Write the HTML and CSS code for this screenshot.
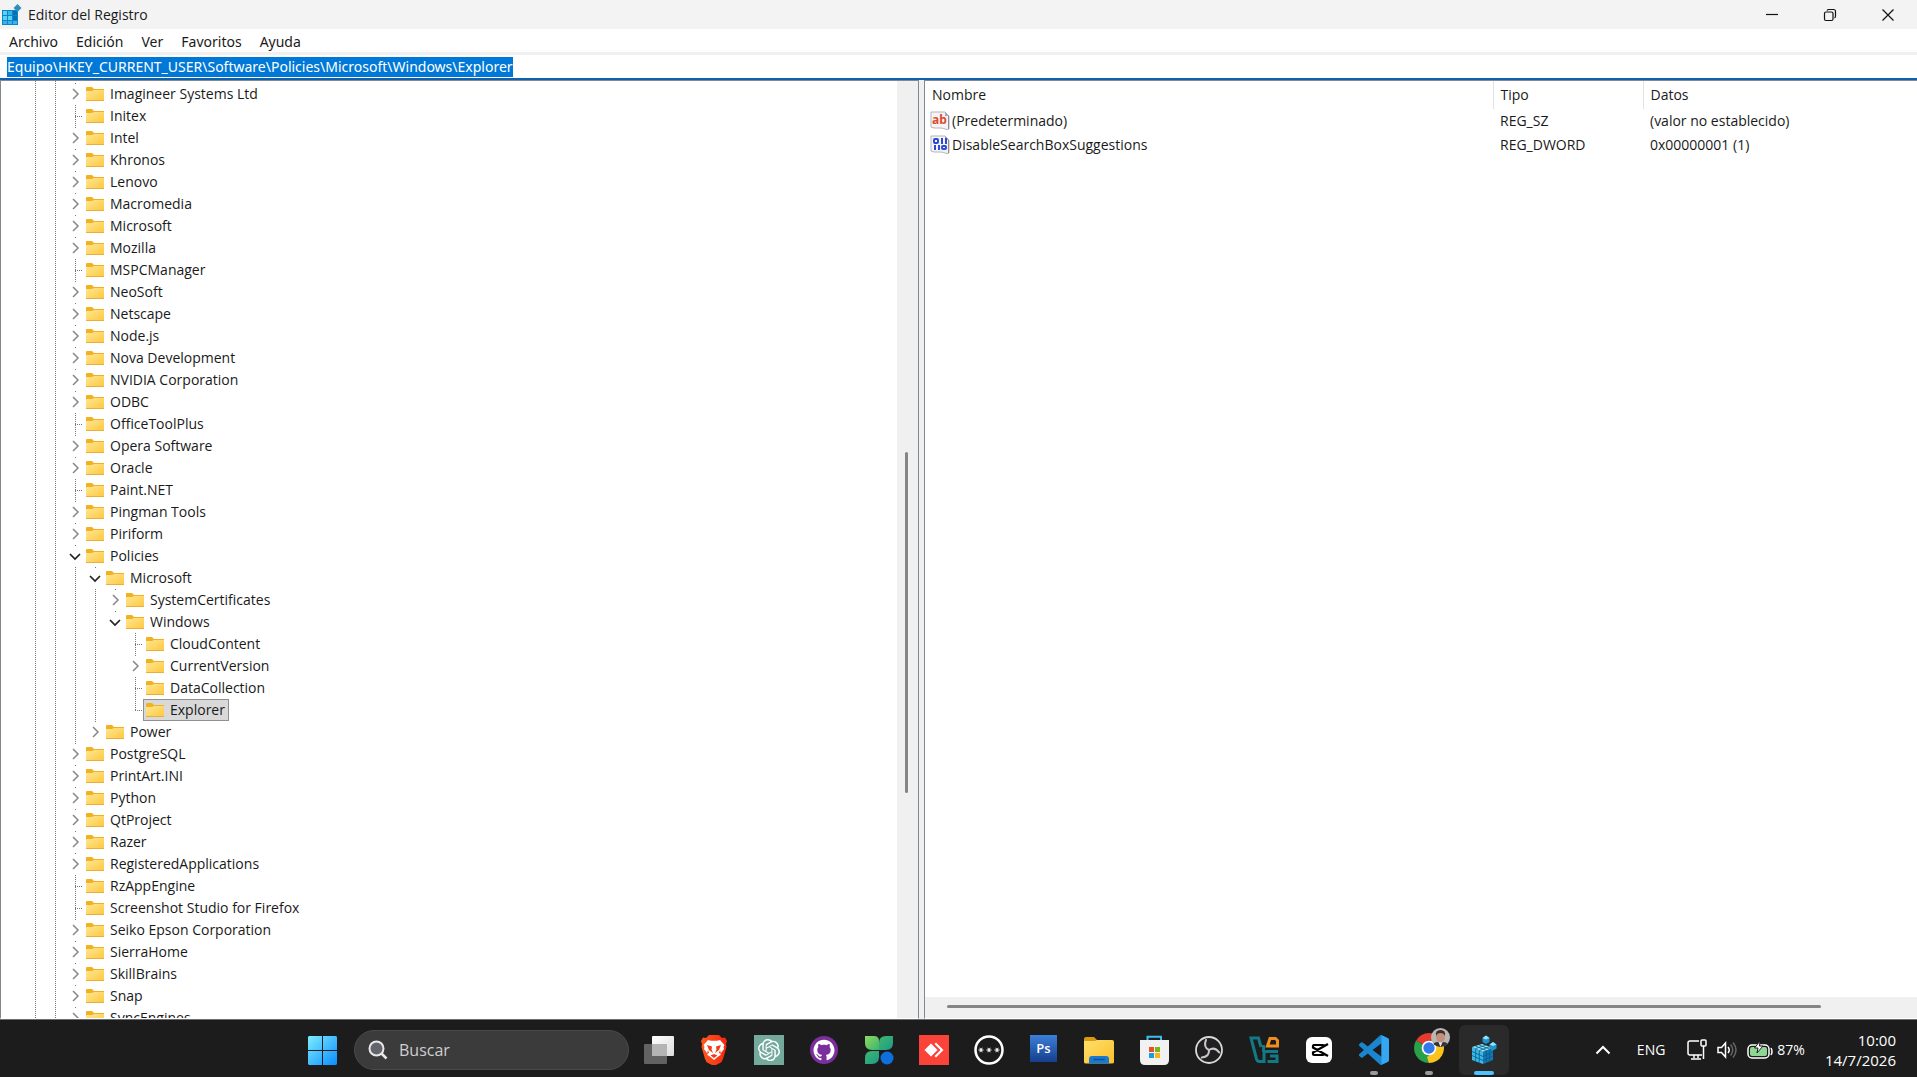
FILE: index.html
```html
<!DOCTYPE html>
<html lang="es">
<head>
<meta charset="utf-8">
<title>Editor del Registro</title>
<link rel="stylesheet" href="styles.css">
</head>
<body>
<header class="titlebar">
  <svg class="app-icon" viewBox="0 0 20 22" aria-hidden="true">
    <path d="M0 6h16v15H0z" fill="#0b86c8"/>
    <path d="M1 7h4v4H1zM1 12h4v4H1zM6 12h4v4H6z" fill="#5fd0f5"/>
    <path d="M6 7h4v4H6zM1 17h4v3H1zM6 17h4v3H6zM11 17h4v3h-4z" fill="#38b4ea"/>
    <path d="M11 7h4v4h-4zM11 12h4v4h-4z" fill="#0a6fae"/>
    <path d="M15.500 0l4 4-4 4-4-4z" fill="#2e8fb8"/>
  </svg>
  <h1 class="title">Editor del Registro</h1>
  <div class="controls">
    <button class="control" aria-label="Minimizar"><svg viewBox="0 0 14 14"><path d="M1 6.500h12"/></svg></button>
    <button class="control" aria-label="Restaurar"><svg viewBox="0 0 14 14"><rect x="1.500" y="4" width="8.500" height="8.500" rx="1.500"/><path d="M4 2.500Q4.500 1.500 6 1.500h4.500Q12.500 1.500 12.500 3.500V8Q12.500 9.500 11.500 10"/></svg></button>
    <button class="control" aria-label="Cerrar"><svg viewBox="0 0 14 14"><path d="M1.500 1.500l11 11M12.500 1.500l-11 11"/></svg></button>
  </div>
</header>
<nav class="menubar">
  <button>Archivo</button><button>Edición</button><button>Ver</button><button>Favoritos</button><button>Ayuda</button>
</nav>
<div class="address">
  <input class="path" type="text" size="60" aria-label="Ruta de la clave" value="Equipo\HKEY_CURRENT_USER\Software\Policies\Microsoft\Windows\Explorer">
</div>
<main class="panes">
  <section class="tree-pane" aria-label="Claves">
    <ul class="tree">
      <li><button class="key closed"><span>Imagineer Systems Ltd</span></button></li>
      <li><button class="key leaf"><span>Initex</span></button></li>
      <li><button class="key closed"><span>Intel</span></button></li>
      <li><button class="key closed"><span>Khronos</span></button></li>
      <li><button class="key closed"><span>Lenovo</span></button></li>
      <li><button class="key closed"><span>Macromedia</span></button></li>
      <li><button class="key closed"><span>Microsoft</span></button></li>
      <li><button class="key closed"><span>Mozilla</span></button></li>
      <li><button class="key leaf"><span>MSPCManager</span></button></li>
      <li><button class="key closed"><span>NeoSoft</span></button></li>
      <li><button class="key closed"><span>Netscape</span></button></li>
      <li><button class="key closed"><span>Node.js</span></button></li>
      <li><button class="key closed"><span>Nova Development</span></button></li>
      <li><button class="key closed"><span>NVIDIA Corporation</span></button></li>
      <li><button class="key closed"><span>ODBC</span></button></li>
      <li><button class="key leaf"><span>OfficeToolPlus</span></button></li>
      <li><button class="key closed"><span>Opera Software</span></button></li>
      <li><button class="key closed"><span>Oracle</span></button></li>
      <li><button class="key leaf"><span>Paint.NET</span></button></li>
      <li><button class="key closed"><span>Pingman Tools</span></button></li>
      <li><button class="key closed"><span>Piriform</span></button></li>
      <li><button class="key open"><span>Policies</span></button>
        <ul>
          <li><button class="key open"><span>Microsoft</span></button>
            <ul>
              <li><button class="key closed"><span>SystemCertificates</span></button></li>
              <li><button class="key open"><span>Windows</span></button>
                <ul>
                  <li><button class="key leaf"><span>CloudContent</span></button></li>
                  <li><button class="key closed"><span>CurrentVersion</span></button></li>
                  <li><button class="key leaf"><span>DataCollection</span></button></li>
                  <li><button class="key leaf selected"><span>Explorer</span></button></li>
                </ul>
              </li>
            </ul>
          </li>
          <li><button class="key closed"><span>Power</span></button></li>
        </ul>
      </li>
      <li><button class="key closed"><span>PostgreSQL</span></button></li>
      <li><button class="key closed"><span>PrintArt.INI</span></button></li>
      <li><button class="key closed"><span>Python</span></button></li>
      <li><button class="key closed"><span>QtProject</span></button></li>
      <li><button class="key closed"><span>Razer</span></button></li>
      <li><button class="key closed"><span>RegisteredApplications</span></button></li>
      <li><button class="key leaf"><span>RzAppEngine</span></button></li>
      <li><button class="key leaf"><span>Screenshot Studio for Firefox</span></button></li>
      <li><button class="key closed"><span>Seiko Epson Corporation</span></button></li>
      <li><button class="key closed"><span>SierraHome</span></button></li>
      <li><button class="key closed"><span>SkillBrains</span></button></li>
      <li><button class="key closed"><span>Snap</span></button></li>
      <li><button class="key closed"><span>SyncEngines</span></button></li>
    </ul>
    <div class="vscroll" aria-hidden="true"><div class="vthumb"></div></div>
  </section>
  <section class="value-pane" aria-label="Valores">
    <table class="values">
      <colgroup><col class="col-name"><col class="col-type"><col></colgroup>
      <thead><tr><th>Nombre</th><th>Tipo</th><th>Datos</th></tr></thead>
      <tbody>
        <tr>
          <td><div class="value-name"><svg viewBox="0 0 20 20" aria-hidden="true"><path d="M1 1h14l4 4v13q-2 1-4 0t-5-1-5 0-4-1z" fill="#f4f4f6" stroke="#b4b4bc"/><path d="M15 1v4h4z" fill="#a9a9b3"/><path d="M18.500 5v13" stroke="#8d8d98"/><text x="2" y="13" font-size="12" font-weight="700" fill="#e0492c">ab</text></svg>(Predeterminado)</div></td>
          <td>REG_SZ</td><td>(valor no establecido)</td>
        </tr>
        <tr>
          <td><div class="value-name"><svg viewBox="0 0 20 20" aria-hidden="true"><path d="M1 1h14l4 4v13q-2 1-4 0t-5-1-5 0-4-1z" fill="#f4f4f6" stroke="#b4b4bc"/><path d="M15 1v4h4z" fill="#a9a9b3"/><path d="M18.500 5v13" stroke="#8d8d98"/><g fill="none" stroke="#2f49d6" stroke-width="2"><rect x="4" y="4" width="4" height="4" rx="1"/><path d="M12 3v6M16 3v6M5 10v5M9 10v5"/><rect x="12" y="11" width="4" height="3" rx="1"/></g></svg>DisableSearchBoxSuggestions</div></td>
          <td>REG_DWORD</td><td>0x00000001 (1)</td>
        </tr>
      </tbody>
    </table>
    <div class="hscroll" aria-hidden="true"><div class="hthumb"></div></div>
  </section>
</main>
<footer class="taskbar">
  <button class="task" aria-label="Inicio"><svg viewBox="0 0 30 30">
    <defs><linearGradient id="win" gradientUnits="userSpaceOnUse" x1="0" y1="0" x2="30" y2="30"><stop offset="0" stop-color="#82f0ff"/><stop offset="1" stop-color="#0a8dff"/></linearGradient></defs>
    <path d="M2 1h13v14H1V2zM16 1h13l1 1v13H16zM1 16h14v14H2l-1-1zM16 16h14v13l-1 1H16z" fill="url(#win)"/></svg></button>
  <label class="search">
    <svg viewBox="0 0 20 20" aria-hidden="true"><circle cx="8.500" cy="8.500" r="7" fill="#62666a" stroke="#e8e8e8" stroke-width="2"/><path d="M13.500 13.500l5 5" stroke="#e8e8e8" stroke-width="2.500"/></svg>
    <input type="text" placeholder="Buscar" aria-label="Buscar">
  </label>
  <button class="task" aria-label="Vista de tareas"><svg viewBox="0 0 30 30">
    <defs><linearGradient id="tv" x2="1" y2="1"><stop offset="0" stop-color="#fff"/><stop offset="1" stop-color="#dcdcdc"/></linearGradient></defs>
    <rect x="8" y="1" width="22" height="20" rx="1" fill="url(#tv)"/><rect y="9" width="23" height="20" rx="1" fill="#6e6e6e" fill-opacity=".85"/><path d="M8 9h15v12H8z" fill="#b4b4b4"/></svg></button>
  <button class="task" aria-label="Brave"><svg viewBox="0 0 30 30">
    <defs><linearGradient id="br" x2="1"><stop offset="0" stop-color="#ff5a1f"/><stop offset="1" stop-color="#f5260f"/></linearGradient></defs>
    <path d="M10 0h10l3 3 3-.5 2 3.500-1 3 .5 3-3.500 12q-1 3-3 4l-6 3-6-3q-2-1-3-4L2.500 12 3 9 2 6l2-3.500L7 3z" fill="url(#br)"/>
    <path d="M9 5l3 .7h6L21 5l4.500 5-1 2 .5 2-3 4-.5 2-3 2-3.500 3-3.500-3-3-2-.5-2-3-4 .5-2-1-2z" fill="#fff"/>
    <path d="M8 10l5 1.500-.5 3L14 18l-4-3zM22 10l-5 1.500.5 3L16 18l4-3zM11.500 20.500L15 19l3.500 1.500L15 23zM9 15l1 3-2 1zM21 15l-1 3 2 1z" fill="#f43a15"/></svg></button>
  <button class="task" aria-label="ChatGPT"><svg viewBox="0 0 30 30"><path d="M0 0h30v30H0z" fill="#74aa9c"/><path transform="translate(4 4) scale(.92)" fill="#fff" d="M22.2819 9.8211a5.9847 5.9847 0 0 0-.5157-4.9108 6.0462 6.0462 0 0 0-6.5098-2.9A6.0651 6.0651 0 0 0 4.9807 4.1818a5.9847 5.9847 0 0 0-3.9977 2.9 6.0462 6.0462 0 0 0 .7427 7.0966 5.98 5.98 0 0 0 .511 4.9107 6.051 6.051 0 0 0 6.5146 2.9001A5.9847 5.9847 0 0 0 13.2599 24a6.0557 6.0557 0 0 0 5.7718-4.2058 5.9894 5.9894 0 0 0 3.9977-2.9001 6.0557 6.0557 0 0 0-.7475-7.0729zm-9.022 12.6081a4.4755 4.4755 0 0 1-2.8764-1.0408l.1419-.0804 4.7783-2.7582a.7948.7948 0 0 0 .3927-.6813v-6.7369l2.02 1.1686a.071.071 0 0 1 .038.052v5.5826a4.504 4.504 0 0 1-4.4945 4.4944zm-9.6607-4.1254a4.4708 4.4708 0 0 1-.5346-3.0137l.142.0852 4.783 2.7582a.7712.7712 0 0 0 .7806 0l5.8428-3.3685v2.3324a.0804.0804 0 0 1-.0332.0615L9.74 19.9502a4.4992 4.4992 0 0 1-6.1408-1.6464zM2.3408 7.8956a4.485 4.485 0 0 1 2.3655-1.9728V11.6a.7664.7664 0 0 0 .3879.6765l5.8144 3.3543-2.0201 1.1685a.0757.0757 0 0 1-.071 0l-4.8303-2.7865A4.504 4.504 0 0 1 2.3408 7.872zm16.5963 3.8558L13.1038 8.364 15.1192 7.2a.0757.0757 0 0 1 .071 0l4.8303 2.7913a4.4944 4.4944 0 0 1-.6765 8.1042v-5.6772a.79.79 0 0 0-.407-.667zm2.0107-3.0231l-.142-.0852-4.7735-2.7818a.7759.7759 0 0 0-.7854 0L9.409 9.2297V6.8974a.0662.0662 0 0 1 .0284-.0615l4.8303-2.7866a4.4992 4.4992 0 0 1 6.6802 4.66zM8.3065 12.863l-2.02-1.1638a.0804.0804 0 0 1-.038-.0567V6.0742a4.4992 4.4992 0 0 1 7.3757-3.4537l-.142.0805L8.704 5.459a.7948.7948 0 0 0-.3927.6813zm1.0976-2.3654l2.602-1.4998 2.6069 1.4998v2.9994l-2.5974 1.4997-2.6067-1.4997Z"/></svg></button>
  <button class="task" aria-label="GitHub Desktop"><svg viewBox="0 0 30 30"><circle cx="15" cy="15" r="14" fill="#7b2f9c"/><path transform="translate(4.500 4.500) scale(.875)" fill="#fff" d="M12 .297c-6.63 0-12 5.373-12 12 0 5.303 3.438 9.8 8.205 11.385.6.113.82-.258.82-.577 0-.285-.01-1.04-.015-2.04-3.338.724-4.042-1.61-4.042-1.61C4.422 18.07 3.633 17.7 3.633 17.7c-1.087-.744.084-.729.084-.729 1.205.084 1.838 1.236 1.838 1.236 1.07 1.835 2.809 1.305 3.495.998.108-.776.417-1.305.76-1.605-2.665-.3-5.466-1.332-5.466-5.93 0-1.31.465-2.38 1.235-3.22-.135-.303-.54-1.523.105-3.176 0 0 1.005-.322 3.3 1.23.96-.267 1.98-.399 3-.405 1.02.006 2.04.138 3 .405 2.28-1.552 3.285-1.23 3.285-1.23.645 1.653.24 2.873.12 3.176.765.84 1.23 1.91 1.23 3.22 0 4.61-2.805 5.625-5.475 5.92.42.36.81 1.096.81 2.22 0 1.606-.015 2.896-.015 3.286 0 .315.21.69.825.57C20.565 22.092 24 17.592 24 12.297c0-6.627-5.373-12-12-12"/></svg></button>
  <button class="task" aria-label="iTop"><svg viewBox="0 0 30 30">
    <defs><linearGradient id="c1" x2="1" y2="1"><stop offset="0" stop-color="#8ddb5c"/><stop offset="1" stop-color="#3bb273"/></linearGradient><linearGradient id="c2" x2="1" y2="1"><stop offset="0" stop-color="#3fb86c"/><stop offset="1" stop-color="#1d9a8a"/></linearGradient></defs>
    <path d="M1 1h9q5 0 5 5v9H8q-7 0-7-7z" fill="url(#c1)"/><path d="M29 1h-7q-7 0-7 7v7h7q7 0 7-7z" fill="url(#c2)"/><path d="M1 29v-6q0-7 7-7h7v6q0 7-7 7z" fill="url(#c2)"/><circle cx="23" cy="23" r="6.500" fill="#0f6fdc"/></svg></button>
  <button class="task" aria-label="AnyDesk"><svg viewBox="0 0 30 30"><path d="M0 0h30v30H0z" fill="#fb4339"/><path d="M5.500 15l6.500-6.500 6.500 6.500-6.500 6.500z" fill="#fff"/><path d="M15.500 9l1.500-1.500L24.500 15 17 22.500 15.500 21l6-6z" fill="#fff"/></svg></button>
  <button class="task" aria-label="Contraseñas"><svg viewBox="0 0 30 30" fill="none" stroke="#fff"><circle cx="15" cy="15" r="13.500" stroke-width="2.500"/><path d="M4.500 15h5M5.800 12.800l2.400 4.400M8.200 12.800l-2.400 4.400M12.500 15h5M13.800 12.800l2.400 4.400M16.200 12.800l-2.400 4.400M20.500 15h5M21.800 12.800l2.400 4.400M24.200 12.800l-2.400 4.400" stroke-width="1"/></svg></button>
  <button class="task" aria-label="Photoshop"><svg viewBox="0 0 30 30">
    <defs><linearGradient id="ps" x2="0" y2="1"><stop offset="0" stop-color="#3c7fd8"/><stop offset="1" stop-color="#153f8d"/></linearGradient></defs>
    <path d="M1 0h27v27H1z" fill="url(#ps)"/><text x="14.500" y="18" text-anchor="middle" font-size="13" font-weight="600" fill="#fff">Ps</text></svg></button>
  <button class="task" aria-label="Explorador de archivos"><svg viewBox="0 0 30 30">
    <defs><linearGradient id="fe" x2="1" y2="1"><stop offset="0" stop-color="#ffdf6b"/><stop offset="1" stop-color="#fcbf2b"/></linearGradient></defs>
    <path d="M0 9V4q0-2 2-2h8l3 3v4z" fill="#d99a12"/><path d="M0 6h11l2-1h15q2 0 2 2v20q0 1.500-2 1.500H2Q0 28.500 0 27z" fill="url(#fe)"/><path d="M5 28.500V24q0-3 3-3h14q3 0 3 3v4.500z" fill="#1979ce"/><path d="M10 24.500h10" stroke="#0b5394" stroke-width="1.500" stroke-linecap="round"/></svg></button>
  <button class="task" aria-label="Microsoft Store"><svg viewBox="0 0 30 30">
    <path d="M8.500 7V1.800h13.500V7" fill="none" stroke="#3bbdf0" stroke-width="2"/><path d="M1 5h29v20q0 5-5 5H6q-5 0-5-5z" fill="#f1f1f1"/><path d="M10 12h5v5h-5z" fill="#e8502a"/><path d="M16 12h5v5h-5z" fill="#7cb518"/><path d="M10 18h5v5h-5z" fill="#159fe0"/><path d="M16 18h5v5h-5z" fill="#fbb511"/></svg></button>
  <button class="task" aria-label="OBS Studio"><svg viewBox="0 0 30 30"><circle cx="15" cy="15" r="13" fill="#211f22" stroke="#d9d9d9" stroke-width="1.800"/><g fill="none" stroke="#c8c8c8" stroke-width="2" stroke-linecap="round"><path id="blade" d="M15 15Q9 12 12 5"/><use href="#blade" transform="rotate(120 15 15)"/><use href="#blade" transform="rotate(240 15 15)"/></g></svg></button>
  <button class="task" aria-label="VSDC"><svg viewBox="0 0 30 30" fill="none" stroke-width="3"><path d="M12 12L9.500 3H2l5.500 21q.8 2.500 3 2.500H15V19q0-2.500 2.500-2.500H29M14.500 10v7M18.500 26.500H28V21h-7" stroke="#127a86"/><path d="M18.500 11l2.500-7.500h5.500l2 2V11z" stroke="#ef8e1f"/></svg></button>
  <button class="task" aria-label="CapCut"><svg viewBox="0 0 30 30"><rect x="2" y="2" width="26" height="26" rx="6" fill="#fff"/><path d="M24 9l-15 8.500V19q0 1 1 1h9q1 0 1-1v-1M24 21L9 12.500V11q0-1 1-1h9q1 0 1 1v1" fill="none" stroke="#000" stroke-width="2.200"/></svg></button>
  <button class="task running" aria-label="Visual Studio Code"><svg viewBox="0 0 24 24"><path fill="#1b86d0" d="M23.150 2.587L18.210.21a1.494 1.494 0 0 0-1.705.29l-9.460 8.630-4.120-3.128a.999.999 0 0 0-1.276.057L.327 7.261A1 1 0 0 0 .326 8.740L3.899 12 .326 15.260a1 1 0 0 0 .001 1.479L1.650 17.940a.999.999 0 0 0 1.276.057l4.120-3.128 9.460 8.630a1.492 1.492 0 0 0 1.704.29l4.942-2.377A1.500 1.500 0 0 0 24 20.060V3.939a1.500 1.500 0 0 0-.85-1.352zm-5.146 14.861L10.826 12l7.178-5.448v10.896z"/><path fill="#35a7f2" d="M18 .2l5.200 2.400q.8.500.8 1.400v16q0 .9-.8 1.400L18 23.800z"/></svg></button>
  <button class="task running" aria-label="Google Chrome"><svg class="wide" viewBox="0 0 42 36">
    <path d="M8.010 12.500A15 15 0 0 1 33.990 12.500L21 20z" fill="#e33b2e"/><path d="M33.990 12.500A15 15 0 0 1 21 35L21 20z" fill="#fcc31e"/><path d="M21 35A15 15 0 0 1 8.010 12.500L21 20z" fill="#29a14a"/><path d="M21 13h13.300l-.3-.5q2 4 1.900 8L27 23z" fill="#fcc31e"/><path d="M21 13h13.200L33 10.800 21 9z" fill="#e33b2e"/><path d="M27.500 23.500L21 35l-2-6z" fill="#fcc31e"/><circle cx="21" cy="20" r="7.300" fill="#fff"/><circle cx="21" cy="20" r="5.700" fill="#3479e8"/>
    <clipPath id="av"><circle cx="32.500" cy="9.500" r="9.500"/></clipPath><g clip-path="url(#av)"><path d="M23 0h19v19H23z" fill="#b9b6b3"/><path d="M24 19q1-5 6-5h5q5 0 6 5z" fill="#33343a"/><path d="M30 13h5l-2.500 6z" fill="#e8e4e2"/><ellipse cx="32.500" cy="8.500" rx="4.500" ry="6" fill="#c58f7d"/><path d="M28 8q-1-6 4.500-6T37 8q-1-3-4.500-3T28 8z" fill="#3b2c28"/></g></svg></button>
  <button class="task active" aria-label="Editor del Registro"><svg viewBox="0 0 30 30">
    <path d="M3 12l10-3 11 4-10 4z" fill="#8fe3fa"/><path d="M3 12l11 5v12L3 25z" fill="#3db8e4"/><path d="M24 13l-10 4v12l10-4z" fill="#1279b4"/><path d="M6.700 14v12M10.300 15.500v12M3 16.500l11 5 10-4.500M3 20.500l11 5 10-4.500M17.300 16v11.500M20.700 14.500v12M6.300 11l11 4.500M10 10l10.500 4M20.500 11.700L10.500 15.500M16.700 10.300L6.700 13.500" fill="none" stroke="#075c8c" stroke-width=".8"/><path d="M13.500 3l3.500-2.500L20.500 3v4L17 9l-3.500-2z" fill="#1f94cc"/><path d="M13.500 3l3.500 1.500L20.500 3 17 .5z" fill="#8fe3fa"/><path d="M20.500 9.500L24 7l3.500 2.500v4L24 15.500l-3.500-2z" fill="#1f94cc"/><path d="M20.500 9.500L24 11l3.500-1.500L24 7z" fill="#8fe3fa"/></svg></button>
  <div class="tray">
    <button class="tray-item" aria-label="Mostrar iconos ocultos"><svg width="16" height="10" viewBox="0 0 16 10"><path d="M1.500 8.500L8 2l6.500 6.500" fill="none" stroke="#fff" stroke-width="2"/></svg></button>
    <button class="tray-item lang">ENG</button>
    <button class="tray-item status" aria-label="Red, volumen y batería">
      <svg width="20" height="22" viewBox="0 0 20 22" fill="none" stroke="#fff" stroke-width="1.500"><path d="M12 2H3Q1 2 1 4v10q0 2 2 2h12M7 16v3M11 16v3M4 20h10"/><rect x="14" y="1" width="5" height="6" rx="1"/><path d="M16.500 7v13"/></svg>
      <svg width="20" height="18" viewBox="0 0 20 18" fill="none" stroke="#fff" stroke-width="1.500"><path d="M1 6.500h3.500L8.500 2v14L4.500 11.500H1z"/><path d="M11 6q2.500 3 0 6"/><path d="M13.500 3.500q4.500 5.500 0 11M16 1.500q6 7.500 0 15" stroke="#666"/></svg>
      <svg width="26" height="18" viewBox="0 0 26 18"><rect x="1" y="4" width="21" height="13" rx="4" fill="none" stroke="#fff" stroke-width="1.500"/><rect x="3" y="6" width="17" height="9" rx="2" fill="#8fd694"/><path d="M24 7q2 3.500 0 7" stroke="#fff" stroke-width="1.500" fill="none"/><path d="M13 0L7.500 7H11l-1 5 6-7h-3.500z" fill="#fff" stroke="#1c1c1c"/></svg>
      <span>87%</span>
    </button>
    <time class="clock"><span>10:00</span><span>14/7/2026</span></time>
  </div>
</footer>
</body>
</html>
```
FILE: styles.css
```css
* { box-sizing: border-box; }
body {
  margin: 0;
  height: 100vh;
  display: flex;
  flex-direction: column;
  overflow: hidden;
  background: #fff;
  color: #1a1a1a;
  font: 14px/20px "Open Sans", "Noto Sans", sans-serif;
}
button, input {
  margin: 0;
  padding: 0;
  border: 0;
  background: none;
  color: inherit;
  font: inherit;
}
svg { display: block; flex: none; }

.titlebar {
  flex: none;
  display: flex;
  align-items: center;
  height: 29px;
  padding-left: 2px;
  background: #f3f3f3;
}
.app-icon { width: 20px; height: 22px; }
.title { margin: 0 0 0 6px; font-size: 14px; font-weight: 400; }
.controls { display: flex; margin-left: auto; }
.control { width: 58px; height: 28px; display: grid; place-items: center; }
.control svg { width: 14px; height: 14px; fill: none; stroke: #111; stroke-width: 1.2; }

.menubar {
  flex: none;
  display: flex;
  gap: 18px;
  height: 26px;
  padding: 3px 9px 0;
  border-bottom: 3px solid #f0f0f0;
  font-family: "Noto Sans", sans-serif;
}
.address { flex: none; height: 25px; padding: 2px 7px 1px; border-bottom: 2px solid #0c62ae; }
.path {
  display: block;
  height: 20px;
  field-sizing: content;
  background: #0078d7;
  color: #fff;
  font-family: "Noto Sans", sans-serif;
}

.panes {
  flex: 1;
  min-height: 0;
  display: grid;
  grid-template-columns: 919fr 998fr;
  background: #f0f0f0;
  border-bottom: 1px solid #6b6e73;
}
.tree-pane {
  display: flex;
  min-height: 0;
  overflow: hidden;
  background: #fff;
  border: 1px solid #828790;
  border-bottom-color: #fff;
}
.tree, .tree ul { margin: 0; padding: 0; list-style: none; }
.tree {
  flex: 1;
  padding: 2px 0 0 65px;
  --dots: repeating-linear-gradient(#777 0 1px, #fff 1px 2px);
  background: var(--dots) 34px 0 / 1px 100% no-repeat, var(--dots) 54px 0 / 1px 100% no-repeat;
}
.tree ul { padding-left: 20px; }
.tree li { background: var(--dots) 9px 0 / 1px 100% no-repeat; }
.tree ul > li:last-child { background-size: 1px 11px; }
.key { display: flex; height: 22px; align-items: center; text-align: left; white-space: nowrap; }
.key::before { content: ""; width: 17px; height: 20px; background: #fff center no-repeat; margin-top: 1px; }
.key.closed::before { background-image: url("data:image/svg+xml,%3Csvg xmlns='http://www.w3.org/2000/svg' width='9' height='12'%3E%3Cpath d='M2 1l5 5-5 5' fill='none' stroke='%23888' stroke-width='1.500'/%3E%3C/svg%3E"); background-position: 5px 3px; }
.key.open::before { background-image: url("data:image/svg+xml,%3Csvg xmlns='http://www.w3.org/2000/svg' width='12' height='9'%3E%3Cpath d='M1 2l5 5 5-5' fill='none' stroke='%23222' stroke-width='1.700'/%3E%3C/svg%3E"); background-position: 3px 5px; }
.key.leaf::before { margin-top: 0; height: 1px; background: repeating-linear-gradient(90deg, #777 0 1px, #fff 1px 2px) 9px 0 / 8px 1px no-repeat; }
.key span { display: flex; align-items: center; gap: 6px; height: 22px; padding: 0 4px 0 3px; }
.key span::before {
  content: "";
  width: 18px;
  height: 15px;
  background: url("data:image/svg+xml,%3Csvg xmlns='http://www.w3.org/2000/svg' width='18' height='15'%3E%3Cdefs%3E%3ClinearGradient id='g' x2='1' y2='1'%3E%3Cstop offset='0' stop-color='%23ffe694'/%3E%3Cstop offset='1' stop-color='%23fdc83c'/%3E%3C/linearGradient%3E%3C/defs%3E%3Cpath d='M0 5V1Q0 0 1 0H6L8 2H18V5z' fill='%23f3b11f'/%3E%3Cpath d='M0 4H6L8 3H18V14H0z' fill='url(%23g)'/%3E%3Cpath d='M0 13H18V14H0z' fill='%23e8b03a'/%3E%3C/svg%3E");
}
.key.selected span { background: #d9d9d9; outline: 1px solid #8f8f8f; outline-offset: -1px; }

.vscroll {
  flex: none;
  width: 21px;
  display: grid;
  grid-template-rows: 371fr 340fr 225fr;
  justify-items: start;
  padding-left: 8px;
  background: #f0f0f0;
}
.vthumb { grid-row: 2; width: 3px; border-radius: 2px; background: #858585; }

.value-pane {
  display: flex;
  flex-direction: column;
  min-width: 0;
  margin-left: 5px;
  overflow: hidden;
  background: #fff;
  border: solid #828790;
  border-width: 1px 0 1px 1px;
  border-bottom-color: #fff;
}
.values { width: 100%; table-layout: fixed; border-collapse: collapse; }
.col-name { width: 568px; }
.col-type { width: 150px; }
.values th { height: 28px; padding: 0 7px; text-align: left; font-weight: 400; border-right: 1px solid #e2e2e2; }
.values th:last-child { border-right: 0; }
.values td { height: 24px; padding: 0 7px; }
.values td:first-child { padding: 0 5px; }
.value-name { display: flex; align-items: center; gap: 2px; }
.value-name svg { width: 20px; height: 20px; }
.hscroll { margin-top: auto; height: 21px; padding: 8px 96px 0 22px; background: #f0f0f0; }
.hthumb { height: 3px; border-radius: 2px; background: #858585; }

.taskbar {
  flex: none;
  display: flex;
  align-items: center;
  height: 57px;
  padding: 2px 21px 0 294px;
  background: #1c1c1c;
  color: #fff;
}
.task {
  position: relative;
  flex: none;
  width: 55px;
  height: 50px;
  display: grid;
  place-items: center;
}
.task svg { width: 30px; height: 30px; }
.task svg.wide { width: 42px; height: 36px; margin-bottom: 8px; }
.task.active { width: 50px; margin: 0 3px; border-radius: 6px; background: #2a2a2a; }
.task.running::after, .task.active::after {
  content: "";
  position: absolute;
  bottom: 0;
  width: 8px;
  height: 4px;
  border-radius: 2px;
  background: #9a9a9a;
}
.task.active::after { width: 20px; background: #4cc2ff; }
.search {
  flex: none;
  display: flex;
  align-items: center;
  gap: 11px;
  width: 275px;
  height: 40px;
  margin: 0 2px 0 5px;
  padding: 0 13px;
  border: 1px solid #4a4a4a;
  border-radius: 20px;
  background: #3b3b3b;
}
.search svg { width: 20px; height: 20px; }
.search input { min-width: 0; flex: 1; font-size: 16px; line-height: 24px; outline: 0; }
.search input::placeholder { color: #cfcfcf; opacity: 1; }

.tray { display: flex; align-items: center; margin-left: auto; }
.tray-item { height: 40px; display: flex; align-items: center; }
.lang { margin: 0 22px 0 26px; }
.status { gap: 10px; margin-right: 20px; }
.status span { margin-left: -6px; }
.clock { display: flex; flex-direction: column; align-items: flex-end; font-size: 15px; }
```
